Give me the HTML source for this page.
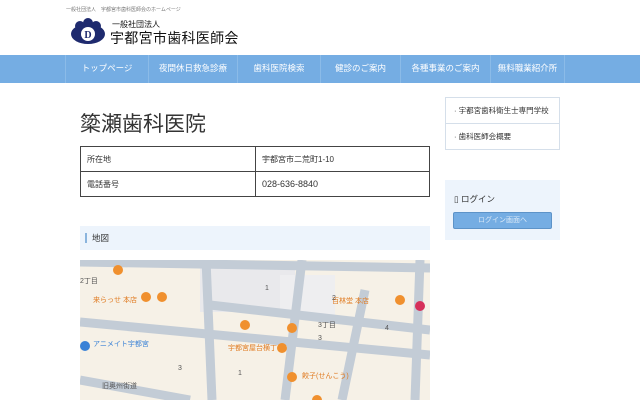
<!DOCTYPE html>
<html><head><meta charset="utf-8"><style>
*{margin:0;padding:0;box-sizing:border-box}
body{width:640px;height:400px;overflow:hidden;background:#fff;font-family:"Liberation Sans","Noto Sans CJK JP",sans-serif;color:#333;position:relative}
.a{position:absolute}
.nav{left:0;top:55px;width:640px;height:28px;background:#75ade3}
.nav span{position:absolute;top:0;height:28px;line-height:27px;color:#fff;font-size:8.5px;text-align:center;border-left:1px solid #8bbbe8}
table{border-collapse:collapse;font-size:8px}
td{border:1px solid #444;height:25px;padding-left:6px}
</style></head><body>
<div class="a" style="left:66px;top:6px;font-size:5px;color:#777">一般社団法人　宇都宮市歯科医師会のホームページ</div>
<svg class="a" style="left:70px;top:17px" width="36" height="30" viewBox="0 0 36 30">
<ellipse cx="18" cy="17" rx="17" ry="10" fill="#1e2a6e"/>
<circle cx="10" cy="9" r="5" fill="#1e2a6e"/><circle cx="18" cy="6" r="5" fill="#1e2a6e"/><circle cx="26" cy="9" r="5" fill="#1e2a6e"/>
<circle cx="18" cy="17" r="7" fill="#fff"/><text x="18" y="21" font-size="10" font-weight="bold" fill="#1e2a6e" text-anchor="middle" font-family="Liberation Serif">D</text></svg>
<div class="a" style="left:112px;top:19px;font-size:8px;color:#111">一般社団法人</div>
<div class="a" style="left:110px;top:28px;font-size:14px;color:#111;letter-spacing:0.3px">宇都宮市歯科医師会</div>
<div class="a nav">
<span style="left:65px;width:83px">トップページ</span>
<span style="left:148px;width:89px">夜間休日救急診療</span>
<span style="left:237px;width:83px">歯科医院検索</span>
<span style="left:320px;width:80px">健診のご案内</span>
<span style="left:400px;width:90px">各種事業のご案内</span>
<span style="left:490px;width:75px;border-right:1px solid #8bbbe8">無料職業紹介所</span>
</div>
<div class="a" style="left:80px;top:108px;font-size:21px;color:#333">簗瀬歯科医院</div>
<table class="a" style="left:80px;top:146px;width:350px">
<tr><td style="width:175px">所在地</td><td>宇都宮市二荒町1-10</td></tr>
<tr><td>電話番号</td><td style="font-size:9px">028-636-8840</td></tr></table>
<div class="a" style="left:80px;top:226px;width:350px;height:24px;background:#edf4fc;font-size:8.5px;line-height:24px;padding-left:12px">地図<div class="a" style="left:5px;top:7px;width:2px;height:10px;background:#8ab4dd"></div></div>
<svg class="a" style="left:80px;top:260px" width="350" height="140">
<rect width="350" height="140" fill="#f6f1e7"/>
<rect x="120" y="4" width="95" height="48" fill="#e9e9ec"/>
<rect x="200" y="15" width="55" height="40" fill="#eeeef0"/>
<g stroke="#c3ccd6" stroke-width="9" fill="none">
<path d="M0 2 L350 8"/><path d="M126 0 L132 140"/><path d="M0 62 L350 95"/>
<path d="M130 45 L350 70"/><path d="M222 0 L205 140"/><path d="M285 30 L262 140"/>
<path d="M0 120 L110 140"/><path d="M340 0 L335 140"/></g>
<g fill="#f0902e"><circle cx="38" cy="10" r="5"/><circle cx="66" cy="37" r="5"/><circle cx="82" cy="37" r="5"/><circle cx="165" cy="65" r="5"/><circle cx="212" cy="68" r="5"/><circle cx="202" cy="88" r="5"/><circle cx="212" cy="117" r="5"/><circle cx="237" cy="140" r="5"/><circle cx="320" cy="40" r="5"/></g>
<circle cx="340" cy="46" r="5" fill="#d6305a"/><circle cx="5" cy="86" r="5" fill="#3b82d6"/>
<g font-size="7" fill="#e07a20"><text x="13" y="42">来らっせ 本店</text><text x="148" y="90">宇都宮屋台横丁</text><text x="222" y="118">餃子(せんこう)</text><text x="252" y="43">百林堂 本店</text></g>
<text x="13" y="86" font-size="7" fill="#3b82d6">アニメイト宇都宮</text>
<g font-size="7" fill="#555"><text x="0" y="23">2丁目</text><text x="185" y="30">1</text><text x="252" y="40">2</text><text x="238" y="67">3丁目</text><text x="238" y="80">3</text><text x="305" y="70">4</text><text x="98" y="110">3</text><text x="158" y="115">1</text><text x="22" y="128">旧奥州街道</text></g>
</svg>
<div class="a" style="left:445px;top:97px;width:115px;height:53px;border:1px solid #d5dfea;font-size:7.5px">
<div style="height:26px;line-height:26px;padding-left:8px;border-bottom:1px solid #d5dfea">· 宇都宮歯科衛生士専門学校</div>
<div style="line-height:26px;padding-left:8px">· 歯科医師会概要</div></div>
<div class="a" style="left:445px;top:180px;width:115px;height:60px;background:#edf4fc">
<div class="a" style="left:9px;top:13px;font-size:8.5px">▯ ログイン</div>
<div class="a" style="left:8px;top:32px;width:99px;height:17px;background:#75ade3;border:1px solid #5d93c8;border-radius:2px;color:#dbe9f7;font-size:7px;text-align:center;line-height:15px">ログイン画面へ</div></div>
</body></html>
